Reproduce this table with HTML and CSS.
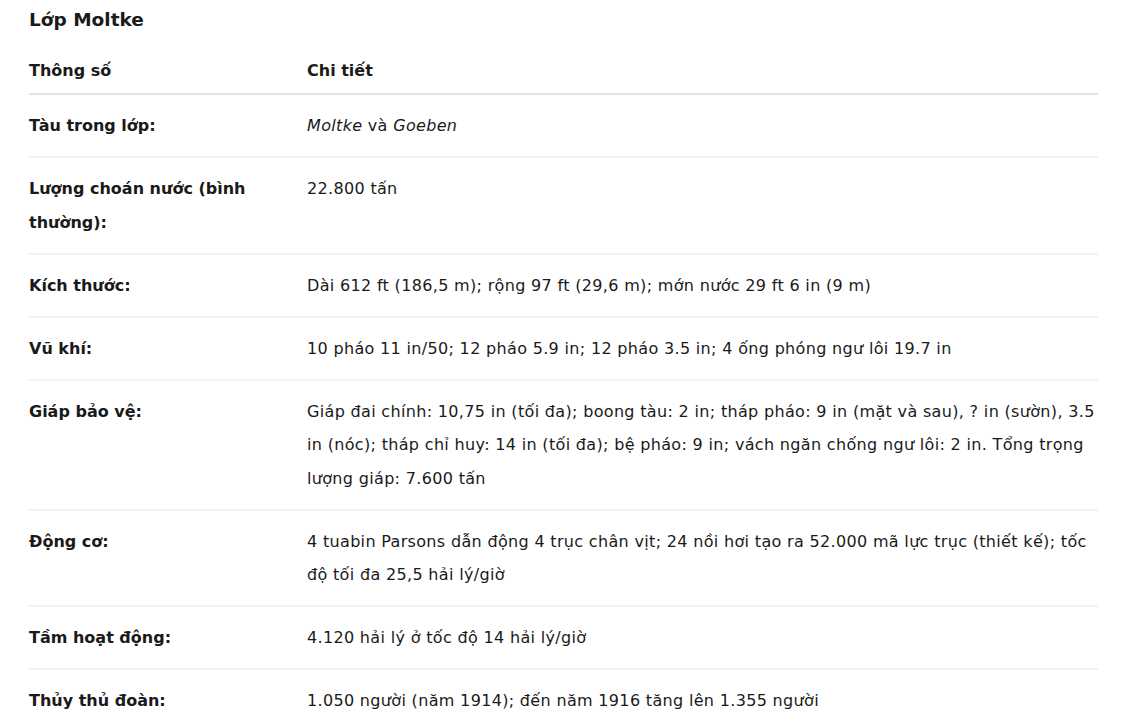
FILE: index.html
```html
<!DOCTYPE html>
<html lang="vi">
<head>
<meta charset="utf-8">
<link rel="stylesheet" href="styles.css">
</head>
<body>
<div class="page">
  <h3 class="title">Lớp Moltke</h3>
  <table class="specs">
    <thead>
      <tr><th class="c1">Thông số</th><th class="c2">Chi tiết</th></tr>
    </thead>
    <tbody>
      <tr><td class="c1">Tàu trong lớp:</td><td class="c2"><em>Moltke</em> và <em>Goeben</em></td></tr>
      <tr><td class="c1">Lượng choán nước (bình thường):</td><td class="c2">22.800 tấn</td></tr>
      <tr><td class="c1">Kích thước:</td><td class="c2">Dài 612 ft (186,5 m); rộng 97 ft (29,6 m); mớn nước 29 ft 6 in (9 m)</td></tr>
      <tr><td class="c1">Vũ khí:</td><td class="c2">10 pháo 11 in/50; 12 pháo 5.9 in; 12 pháo 3.5 in; 4 ống phóng ngư lôi 19.7 in</td></tr>
      <tr><td class="c1">Giáp bảo vệ:</td><td class="c2">Giáp đai chính: 10,75 in (tối đa); boong tàu: 2 in; tháp pháo: 9 in (mặt và sau), ? in (sườn), 3.5 in (nóc); tháp chỉ huy: 14 in (tối đa); bệ pháo: 9 in; vách ngăn chống ngư lôi: 2 in. Tổng trọng lượng giáp: 7.600 tấn</td></tr>
      <tr><td class="c1">Động cơ:</td><td class="c2">4 tuabin Parsons dẫn động 4 trục chân vịt; 24 nồi hơi tạo ra 52.000 mã lực trục (thiết kế); tốc độ tối đa 25,5 hải lý/giờ</td></tr>
      <tr><td class="c1">Tầm hoạt động:</td><td class="c2">4.120 hải lý ở tốc độ 14 hải lý/giờ</td></tr>
      <tr><td class="c1">Thủy thủ đoàn:</td><td class="c2">1.050 người (năm 1914); đến năm 1916 tăng lên 1.355 người</td></tr>
    </tbody>
  </table>
</div>
</body>
</html>
```
FILE: styles.css
```css
html, body {
  margin: 0;
  padding: 0;
  background: #ffffff;
}
body {
  font-family: "DejaVu Sans", "Noto Sans", sans-serif;
  color: #1a1a1a;
  font-size: 16px;
}
.page {
  padding: 6px 39px 0 29px;
}
.title {
  margin: 0;
  font-size: 18.5px;
  font-weight: 700;
  line-height: 28px;
}
.specs {
  width: 100%;
  border-collapse: collapse;
  table-layout: fixed;
}
.specs th, .specs td {
  text-align: left;
  vertical-align: top;
  line-height: 33.5px;
  box-sizing: border-box;
}
.specs th {
  font-weight: 700;
  padding: 20px 0 5.5px;
  border-bottom: 2px solid #e2e2e2;
}
.specs td {
  padding: 14px 0 13.5px;
  border-bottom: 2px solid #f2f2f2;
}
.specs td.c2 {
  letter-spacing: 0.33px;
}
.specs td.c1 {
  font-weight: 700;
}
.specs .c1 {
  width: 278px;
  padding-right: 30px;
}
.specs tbody tr:last-child td {
  border-bottom: none;
}
em {
  font-style: italic;
}
```
